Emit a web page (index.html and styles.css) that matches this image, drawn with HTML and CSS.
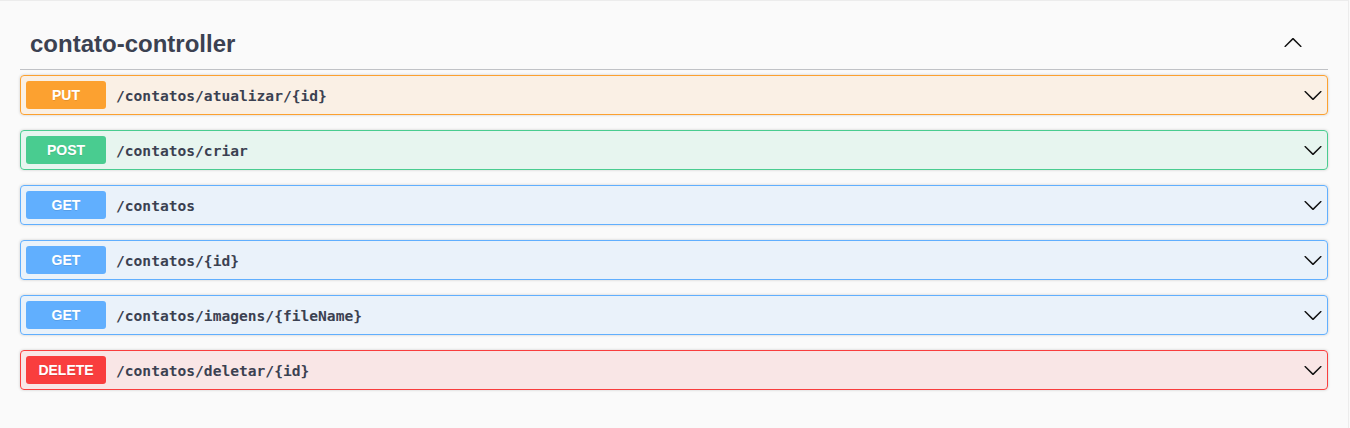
FILE: index.html
```html
<!DOCTYPE html>
<html lang="pt">
<head>
<meta charset="utf-8">
<title>contato-controller</title>
<link rel="stylesheet" href="styles.css">
</head>
<body>
<div class="page">
  <section class="tag-section">
    <h3 class="tag">
      <span class="tag-name">contato-controller</span>
      <button class="tag-toggle" aria-label="Recolher">
        <svg width="20" height="20" viewBox="0 0 20 20"><path d="M17.418 6.109c.272-.268.709-.268.979 0s.271.701 0 .969l-7.908 7.83c-.27.268-.707.268-.979 0l-7.908-7.83c-.27-.268-.27-.701 0-.969.271-.268.709-.268.979 0L10 13.25l7.418-7.141z" transform="rotate(180 10 10)"/></svg>
      </button>
    </h3>
    <div class="ops">
      <div class="op op-put">
        <span class="method">PUT</span>
        <span class="path">/contatos/atualizar/{id}</span>
        <svg class="arrow" width="20" height="20" viewBox="0 0 20 20"><path d="M17.418 6.109c.272-.268.709-.268.979 0s.271.701 0 .969l-7.908 7.83c-.27.268-.707.268-.979 0l-7.908-7.83c-.27-.268-.27-.701 0-.969.271-.268.709-.268.979 0L10 13.25l7.418-7.141z"/></svg>
      </div>
      <div class="op op-post">
        <span class="method">POST</span>
        <span class="path">/contatos/criar</span>
        <svg class="arrow" width="20" height="20" viewBox="0 0 20 20"><path d="M17.418 6.109c.272-.268.709-.268.979 0s.271.701 0 .969l-7.908 7.83c-.27.268-.707.268-.979 0l-7.908-7.83c-.27-.268-.27-.701 0-.969.271-.268.709-.268.979 0L10 13.25l7.418-7.141z"/></svg>
      </div>
      <div class="op op-get">
        <span class="method">GET</span>
        <span class="path">/contatos</span>
        <svg class="arrow" width="20" height="20" viewBox="0 0 20 20"><path d="M17.418 6.109c.272-.268.709-.268.979 0s.271.701 0 .969l-7.908 7.83c-.27.268-.707.268-.979 0l-7.908-7.83c-.27-.268-.27-.701 0-.969.271-.268.709-.268.979 0L10 13.25l7.418-7.141z"/></svg>
      </div>
      <div class="op op-get">
        <span class="method">GET</span>
        <span class="path">/contatos/{id}</span>
        <svg class="arrow" width="20" height="20" viewBox="0 0 20 20"><path d="M17.418 6.109c.272-.268.709-.268.979 0s.271.701 0 .969l-7.908 7.83c-.27.268-.707.268-.979 0l-7.908-7.83c-.27-.268-.27-.701 0-.969.271-.268.709-.268.979 0L10 13.25l7.418-7.141z"/></svg>
      </div>
      <div class="op op-get">
        <span class="method">GET</span>
        <span class="path">/contatos/imagens/{fileName}</span>
        <svg class="arrow" width="20" height="20" viewBox="0 0 20 20"><path d="M17.418 6.109c.272-.268.709-.268.979 0s.271.701 0 .969l-7.908 7.83c-.27.268-.707.268-.979 0l-7.908-7.83c-.27-.268-.27-.701 0-.969.271-.268.709-.268.979 0L10 13.25l7.418-7.141z"/></svg>
      </div>
      <div class="op op-delete">
        <span class="method">DELETE</span>
        <span class="path">/contatos/deletar/{id}</span>
        <svg class="arrow" width="20" height="20" viewBox="0 0 20 20"><path d="M17.418 6.109c.272-.268.709-.268.979 0s.271.701 0 .969l-7.908 7.83c-.27.268-.707.268-.979 0l-7.908-7.83c-.27-.268-.27-.701 0-.969.271-.268.709-.268.979 0L10 13.25l7.418-7.141z"/></svg>
      </div>
    </div>
  </section>
</div>
</body>
</html>
```
FILE: styles.css
```css
* { box-sizing: border-box; }

html, body {
  margin: 0;
  padding: 0;
  background: #fafafa;
}

.page {
  width: 1349px;
  height: 428px;
  border-top: 1px solid #ececec;
  border-right: 1px solid #ececec;
  padding: 16px 20px 0 20px;
  font-family: "Liberation Sans", Arial, sans-serif;
  color: #3b4151;
}

.tag {
  display: flex;
  align-items: center;
  margin: 0 0 5px 0;
  padding: 10px 25px 10px 10px;
  border-bottom: 1px solid rgba(59, 65, 81, 0.3);
  font-size: 24px;
  font-weight: 700;
  line-height: 30px;
}

.tag-name {
  flex: 1;
  padding-top: 2px;
}

.tag-toggle {
  display: flex;
  align-items: center;
  justify-content: center;
  width: 20px;
  height: 30px;
  padding: 0;
  border: 0;
  background: none;
  fill: #111;
}

.ops {
  display: flex;
  flex-direction: column;
  gap: 15px;
}

.op {
  display: flex;
  align-items: center;
  height: 40px;
  padding: 5px;
  border: 1px solid;
  border-radius: 4px;
  box-shadow: 0 0 3px rgba(0, 0, 0, 0.19);
}

.method {
  min-width: 80px;
  height: 28px;
  display: flex;
  align-items: center;
  justify-content: center;
  border-radius: 3px;
  color: #fff;
  font-family: "Liberation Sans", Arial, sans-serif;
  font-size: 14px;
  font-weight: 700;
  text-shadow: 0 1px 0 rgba(0, 0, 0, 0.1);
}

.path {
  flex: 1;
  padding: 0 10px;
  font-family: "DejaVu Sans Mono", "Liberation Mono", monospace;
  font-size: 14.6px;
  font-weight: 700;
  color: #3b4151;
  padding-top: 1px;
}

.arrow {
  fill: #111;
  margin-right: -1px;
}

.op-put { border-color: #fca130; background: rgba(252, 161, 48, 0.1); }
.op-put .method { background: #fca130; }

.op-post { border-color: #49cc90; background: rgba(73, 204, 144, 0.1); }
.op-post .method { background: #49cc90; }

.op-get { border-color: #61affe; background: rgba(97, 175, 254, 0.1); }
.op-get .method { background: #61affe; }

.op-delete { border-color: #f93e3e; background: rgba(249, 62, 62, 0.1); }
.op-delete .method { background: #f93e3e; }
```
